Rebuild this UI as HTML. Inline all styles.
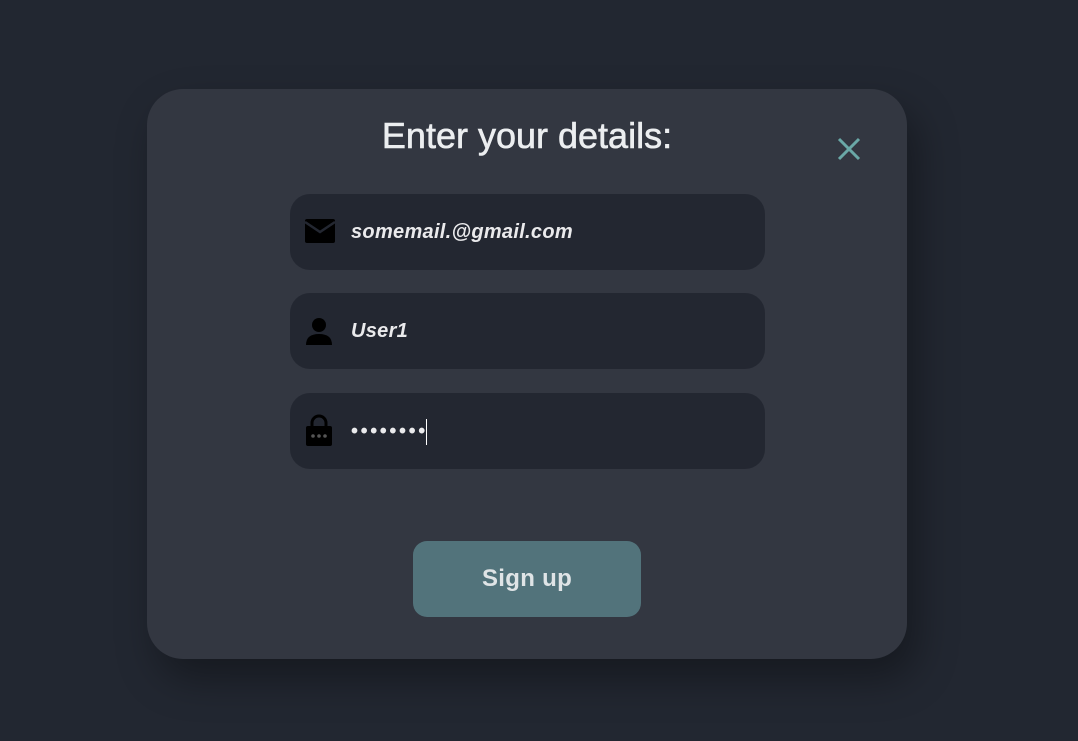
<!DOCTYPE html>
<html><head><style>
body{margin:0;width:1078px;height:741px;background:#222731;font-family:"Liberation Sans",sans-serif;overflow:hidden;position:relative}
.card{position:absolute;left:147px;top:89px;width:760px;height:570px;background:#333741;border-radius:36px;box-shadow:10px 20px 40px rgba(0,0,0,.35)}
h1{position:absolute;left:0;width:760px;top:25px;margin:0;text-align:center;color:#eceef0;font-size:36px;font-weight:normal;line-height:44px;-webkit-text-stroke:0.6px #eceef0}
.field{position:absolute;left:143px;width:475px;height:76px;background:#232731;border-radius:20px}
.field .t{position:absolute;left:61px;top:26px;color:#eaeaec;font-weight:bold;font-style:italic;font-size:20px;letter-spacing:0.3px;line-height:24px}
.field svg{position:absolute;left:14px;top:24px}
.btn{position:absolute;left:266px;top:452px;width:228px;height:76px;background:#52737b;border-radius:14px;color:#dfe4e6;font-weight:bold;font-size:24px;letter-spacing:0.3px;text-align:center;line-height:76px}
</style></head><body>
<div class="card">
<h1>Enter your details:</h1>
<svg style="position:absolute;left:689px;top:47px" width="26" height="26" viewBox="0 0 26 26"><path d="M3 3L23 23M23 3L3 23" stroke="#6aa8a7" stroke-width="3"/></svg>
<div class="field" style="top:105px"><svg width="32" height="28" viewBox="0 0 32 28"><rect x="1" y="1" width="30" height="24" rx="2" fill="#000"/><path d="M1 4L16 14L31 4" stroke="#232731" stroke-width="2.5" fill="none"/></svg><div class="t">somemail.@gmail.com</div></div>
<div class="field" style="top:204px"><svg width="32" height="30" viewBox="0 0 32 30"><circle cx="15" cy="8" r="7" fill="#000"/><path d="M2 28Q2 17 15 17Q28 17 28 28Z" fill="#000"/></svg><div class="t">User1</div></div>
<div class="field" style="top:304px"><svg width="32" height="34" viewBox="0 0 32 34" style="top:20px"><path d="M8 14V10A7 7 0 0 1 22 10V14" stroke="#000" stroke-width="3" fill="none"/><rect x="2" y="13" width="26" height="20" rx="2" fill="#000"/><circle cx="9" cy="23" r="1.8" fill="#555"/><circle cx="15" cy="23" r="1.8" fill="#555"/><circle cx="21" cy="23" r="1.8" fill="#555"/></svg><div class="t" style="font-style:normal;letter-spacing:2.6px">••••••••<span style="display:inline-block;width:1px;height:26px;background:#fff;vertical-align:middle;margin-left:-2px"></span></div></div>
<div class="btn">Sign up</div>
</div>
</body></html>
